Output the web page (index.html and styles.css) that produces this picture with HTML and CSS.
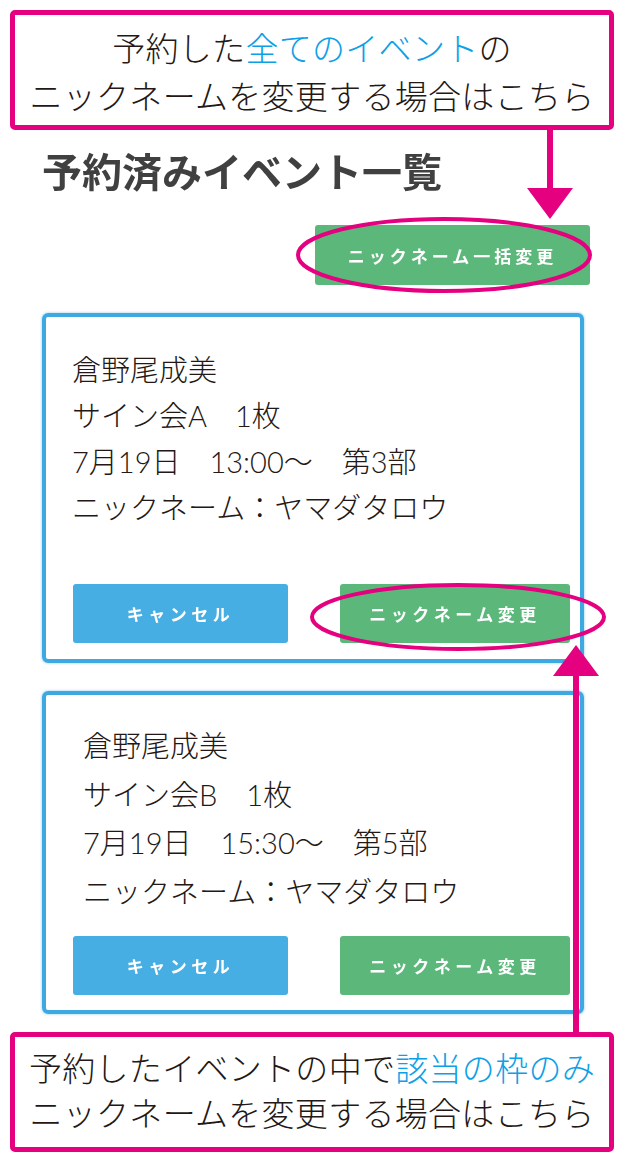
FILE: index.html
```html
<!DOCTYPE html>
<html lang="ja">
<head>
    <meta charset="UTF-8">
    <meta name="viewport" content="width=device-width, initial-scale=1.0">
    <title>予約済みイベント一覧</title>
    <link rel="stylesheet" href="styles.css">
</head>
<body>
    <div class="sheet">
        <!-- note for the bulk rename button -->
        <div class="callout callout-top">
            <p>予約した<span class="hl">全てのイベント</span>の</p>
            <p>ニックネームを変更する場合はこちら</p>
        </div>

        <main>
            <h1 class="page-title">予約済みイベント一覧</h1>

            <div class="bulk-row">
                <button class="btn btn-green btn-bulk">ニックネーム一括変更</button>
            </div>

            <div class="ticket ticket-first">
                <div class="ticket-info">
                    <p>倉野尾成美</p>
                    <p>サイン会A　1枚</p>
                    <p>7月19日　13:00〜　第3部</p>
                    <p>ニックネーム：ヤマダタロウ</p>
                </div>
                <div class="ticket-actions">
                    <button class="btn btn-blue">キャンセル</button>
                    <button class="btn btn-green">ニックネーム変更</button>
                </div>
            </div>

            <div class="ticket ticket-second">
                <div class="ticket-info">
                    <p>倉野尾成美</p>
                    <p>サイン会B　1枚</p>
                    <p>7月19日　15:30〜　第5部</p>
                    <p>ニックネーム：ヤマダタロウ</p>
                </div>
                <div class="ticket-actions">
                    <button class="btn btn-blue">キャンセル</button>
                    <button class="btn btn-green">ニックネーム変更</button>
                </div>
            </div>
        </main>

        <!-- note for the per-ticket rename button -->
        <div class="callout callout-bottom">
            <p>予約したイベントの中で<span class="hl">該当の枠のみ</span></p>
            <p>ニックネームを変更する場合はこちら</p>
        </div>

        <!-- arrows and rings drawn on top of the page -->
        <svg class="marks" width="630" height="1158" viewBox="0 0 630 1158">
            <g fill="#e4007f">
                <rect x="547" y="128" width="6" height="62"/>
                <polygon points="527,188 573,188 550,219"/>
                <rect x="573" y="672" width="6" height="362"/>
                <polygon points="553,676 599,676 576,645"/>
            </g>
            <g fill="none" stroke="#e4007f" stroke-width="4">
                <ellipse cx="444" cy="255" rx="146" ry="36"/>
                <ellipse cx="458" cy="617" rx="146" ry="32"/>
            </g>
        </svg>
    </div>
</body>
</html>
```

FILE: styles.css
```css
* {
    box-sizing: border-box;
    margin: 0;
    padding: 0;
}

html, body {
    width: 100%;
    height: 100%;
    background-color: white;
    font-family: 'Noto Sans CJK JP', 'Noto Sans', sans-serif;
    color: #231815;
}

.sheet {
    position: relative;
    width: 630px;
    height: 1158px;
    padding-top: 10px;
    overflow: hidden;
}

.callout {
    margin: 0 16px 0 10px;
    border: 5px solid #e4007f;
    border-radius: 5px;
    background-color: white;
    text-align: center;
    font-size: 33px;
    font-weight: 300;
    line-height: 48px;
    letter-spacing: 0.3px;
}

.callout-top {
    height: 120px;
    padding-top: 8px;
}

.callout-bottom {
    height: 120px;
    margin-top: 18px;
    padding-top: 8px;
    line-height: 45px;
}

.hl {
    color: #0ea0e6;
}

main {
    padding-left: 42px;
}

.page-title {
    margin-top: 16px;
    font-size: 40px;
    line-height: 48px;
    font-weight: bold;
    color: #404040;
    filter: blur(0.6px);
}

.bulk-row {
    display: flex;
    justify-content: flex-end;
    padding-right: 40px;
    margin-top: 31px;
}

.btn {
    border: none;
    border-radius: 3px;
    color: white;
    font-family: 'Noto Sans CJK JP', sans-serif;
    font-size: 17px;
    font-weight: bold;
    letter-spacing: 4.5px;
    height: 59px;
    filter: blur(0.4px);
}

.btn-green {
    background-color: #5cb87a;
    width: 230px;
}

.btn-blue {
    background-color: #46aee3;
    width: 215px;
}

.btn-bulk {
    width: 275px;
    height: 60px;
    letter-spacing: 4px;
}

.ticket {
    width: 542px;
    border: 4px solid #3ea9e1;
    border-radius: 6px;
    box-shadow: 0 0 3px rgba(62, 169, 225, 0.6);
}

/* latin face first so the digits come out wider */
.ticket-info {
    font-family: Lato, 'Noto Sans CJK JP', sans-serif;
    font-size: 29px;
    font-weight: 300;
}

.ticket-actions {
    display: flex;
    justify-content: space-between;
    padding: 0 10px 0 27px;
}

.ticket-first {
    margin-top: 28px;
    padding: 30px 0 16px;
}

.ticket-first .ticket-info {
    padding-left: 26px;
    line-height: 46px;
}

.ticket-first .ticket-actions {
    margin-top: 53px;
}

.ticket-second {
    margin-top: 28px;
    padding: 27px 0 15px;
}

.ticket-second .ticket-info {
    padding-left: 37px;
    line-height: 48.5px;
}

.ticket-second .ticket-actions {
    margin-top: 20px;
}

.marks {
    position: absolute;
    top: 0;
    left: 0;
    pointer-events: none;
}
```
